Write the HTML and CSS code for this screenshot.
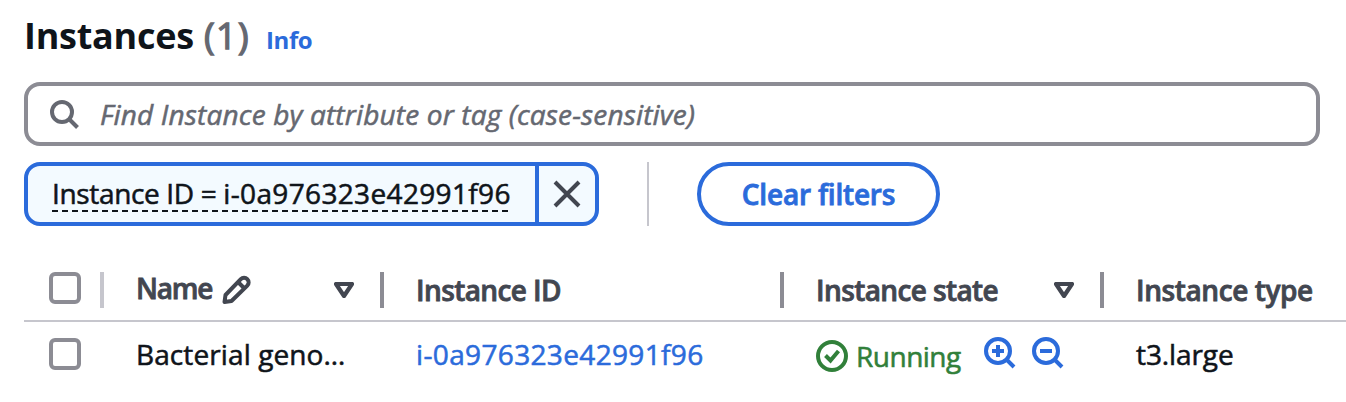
FILE: index.html
```html
<!DOCTYPE html>
<html lang="en">
<head>
<meta charset="utf-8">
<title>Instances</title>
<link rel="stylesheet" href="styles.css">
</head>
<body>
<main class="panel">
  <header class="heading">
    <h1 class="title"><span class="title-name">Instances</span> <span class="count">(1)</span></h1>
    <a class="info">Info</a>
  </header>

  <div class="search">
    <svg class="search-icon" width="32" height="32" viewBox="0 0 32 32"><circle cx="14" cy="14" r="10"/><path d="M21 21l8.500 8.500"/></svg>
    <span class="placeholder">Find Instance by attribute or tag (case-sensitive)</span>
  </div>

  <div class="filters">
    <div class="token">
      <div class="token-label"><span class="token-text">Instance ID = <span class="token-value">i-0a976323e42991f96</span></span></div>
      <div class="token-remove"><svg width="32" height="32" viewBox="0 0 32 32"><path d="M4 4l24 24M28 4L4 28"/></svg></div>
    </div>
    <div class="divider"></div>
    <div class="clear"><span class="clear-text">Clear filters</span></div>
  </div>

  <div class="table">
    <div class="row head">
      <div class="cell check"><span class="box"></span></div>
      <div class="cell name"><span class="name-label">Name</span>
        <svg class="pencil" width="32" height="32" viewBox="0 0 32 32"><path d="M3.500 28l1-7L19.800 5.200a4.500 4.500 0 0 1 6.500 6.500L10.500 27z M17 8l6.500 6.500"/></svg>
        <svg class="sort" width="20" height="16" viewBox="0 0 20 16"><path d="M2 2h16l-8 12z"/></svg>
      </div>
      <div class="cell"><span class="id-label">Instance ID</span></div>
      <div class="cell"><span class="state-label">Instance state</span>
        <svg class="sort" width="20" height="16" viewBox="0 0 20 16"><path d="M2 2h16l-8 12z"/></svg>
      </div>
      <div class="cell last"><span class="type-label">Instance type</span></div>
    </div>
    <div class="row body">
      <div class="cell check"><span class="box"></span></div>
      <div class="cell"><span class="name-value">Bacterial geno…</span></div>
      <div class="cell"><a class="id-value">i-0a976323e42991f96</a></div>
      <div class="cell state">
        <svg class="ok" width="32" height="32" viewBox="0 0 32 32"><circle cx="16" cy="16" r="14"/><path d="M9.500 15.500l5 5 8-9.500"/></svg>
        <span class="state-value">Running</span>
        <svg class="zoom" width="32" height="32" viewBox="0 0 32 32"><circle cx="14" cy="14" r="12"/><path d="M22.500 22.500l7.500 7.500M8 14h12M14 8v12"/></svg>
        <svg class="zoom" width="32" height="32" viewBox="0 0 32 32"><circle cx="14" cy="14" r="12"/><path d="M22.500 22.500l7.500 7.500M8 14h12"/></svg>
      </div>
      <div class="cell last"><span class="type-value">t3.large</span></div>
    </div>
  </div>
</main>
</body>
</html>
```

FILE: styles.css
```css
* { box-sizing: border-box; }
body {
  margin: 0;
  background: #fff;
  color: #0f141a;
  font-family: "Open Sans", "Noto Sans", sans-serif;
  font-size: 28px;
  line-height: 40px;
  overflow: hidden;
  -webkit-text-stroke: 0.55px currentColor;
}
svg { display: block; flex: none; fill: none; stroke: currentColor; stroke-width: 4; }
span, a { white-space: nowrap; }

.panel { width: 1346px; height: 402px; padding-left: 24px; overflow: hidden; }

.heading { display: flex; align-items: baseline; height: 82px; padding-top: 12px; }
.title { display: flex; align-items: baseline; margin: 0; font-size: 36px; line-height: 48px; font-weight: 700; letter-spacing: -0.25px; -webkit-text-stroke-width: 0; }
.count { margin-left: 10px; color: #656871; font-weight: 400; letter-spacing: 1.4px; -webkit-text-stroke-width: 1.3px; }
.info { margin-left: 16px; color: #2b6bdb; font-size: 24px; font-weight: 700; letter-spacing: -0.4px; -webkit-text-stroke-width: 0; }

.search { display: flex; align-items: center; width: 1296px; height: 64px; padding-left: 20px; border: 4px solid #8c8c94; border-radius: 16px; color: #656871; }
.search-icon { margin-right: 20px; }
.placeholder { font-style: italic; letter-spacing: 0.16px; }

.filters { display: flex; height: 64px; margin-top: 16px; }
.token { display: flex; width: 575px; border: 4px solid #2b6bdb; border-radius: 16px; background: #f3faff; }
.token-label { width: 511px; padding: 8px 0 0 24px; border-right: 4px solid #2b6bdb; }
.token-text { display: block; width: 459px; height: 38px; letter-spacing: -0.35px; line-height: 39px; background: repeating-linear-gradient(90deg, #0f141a 0 6px, transparent 6px 10px) bottom / 100% 2px no-repeat; }
.token-value { letter-spacing: 0.35px; }
.token-remove { display: grid; place-items: center; flex: 1; color: #424650; }
.divider { width: 2px; margin: 0 48px; background: #c6c6cd; }
.clear { display: flex; justify-content: center; align-items: center; width: 243px; border: 4px solid #2b6bdb; border-radius: 32px; color: #2b6bdb; font-weight: 600; letter-spacing: -0.2px; -webkit-text-stroke-width: 0.8px; }

.table { margin-top: 34px; }
.row { display: grid; grid-template-columns: 80px 280px 400px 320px 242px; }
.head { height: 62px; color: #424650; font-weight: 600; letter-spacing: -0.6px; border-bottom: 2px solid #c6c6cd; -webkit-text-stroke-width: 0.8px; }
.body { padding-top: 2px; }
.cell { display: flex; align-items: center; height: 60px; padding-left: 32px; }
.head .cell { background: linear-gradient(#8c8c94, #8c8c94) right 12px / 4px 36px no-repeat; }
.head .check { background-image: linear-gradient(#c6c6cd, #c6c6cd); }
.head .last { background: none; letter-spacing: -0.4px; }
.head .name { padding-bottom: 4px; }
.cell.check { padding: 0 0 0 25px; }
.head .check { padding-bottom: 4px; }
.box { width: 32px; height: 32px; border: 4px solid #8c8c94; border-radius: 6px; }
.sort { margin: 0 30px 0 auto; stroke-width: 4.2; stroke-linejoin: round; }
.name .sort { position: relative; top: 2px; }
.name-label { width: 78px; letter-spacing: -1.2px; }
.pencil { margin: 4px 0 0 7px; stroke-linejoin: round; }
.state { color: #31803a; padding-top: 4px; }
.state .zoom { color: #2b6bdb; margin: 0 0 6px 16px; }
.ok { margin-right: 8px; }
.state-value { width: 112px; letter-spacing: -0.5px; }
.name-value { letter-spacing: 0.1px; }
.id-value { color: #2b6bdb; letter-spacing: 0.35px; }
.type-value { letter-spacing: -0.1px; }
```
